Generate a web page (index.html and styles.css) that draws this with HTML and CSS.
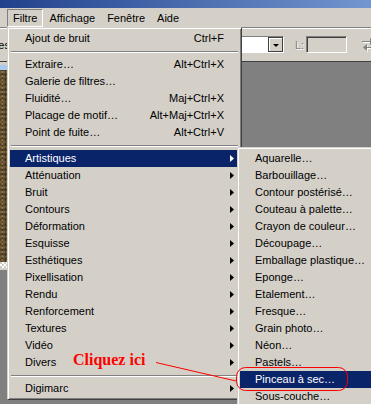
FILE: index.html
```html
<!DOCTYPE html>
<html lang="fr">
<head>
  <meta charset="UTF-8">
  <meta name="viewport" content="width=device-width, initial-scale=1.0">
  <title>Filtre - Artistiques</title>
  <link rel="stylesheet" href="styles.css">
</head>
<body>
  <div class="app">
    <div class="titlebar"></div>

    <nav class="menubar">
      <span class="menubar-item open">Filtre</span>
      <span class="menubar-item">Affichage</span>
      <span class="menubar-item">Fenêtre</span>
      <span class="menubar-item">Aide</span>
    </nav>

    <!-- options bar, mostly hidden behind the menu -->
    <div class="options">
      <div class="opt-label"><span>Styles</span></div>
      <div class="combo"><div class="combo-btn"><i></i></div></div>
      <span class="opt-text">L:</span>
      <div class="field"></div>
      <svg class="swap" width="16" height="16" viewBox="0 0 16 16">
        <g fill="#fff" transform="translate(1 1)">
          <rect x="1" y="4" width="9" height="1"/><polygon points="9,1 13,4.5 9,8"/>
          <rect x="5" y="10" width="9" height="1"/><polygon points="6,7 2,10.5 6,14"/>
        </g>
        <g fill="#808080">
          <rect x="1" y="4" width="9" height="1"/><polygon points="9,1 13,4.5 9,8"/>
          <rect x="5" y="10" width="9" height="1"/><polygon points="6,7 2,10.5 6,14"/>
        </g>
      </svg>
    </div>

    <div class="desk">
      <div class="doc">
        <div class="doc-title"></div>
        <div class="doc-image"></div>
        <div class="doc-checker"></div>
      </div>
    </div>

    <!-- Filtre menu -->
    <div class="menu main-menu">
      <div class="item"><span>Ajout de bruit</span><span class="key">Ctrl+F</span></div>
      <div class="sep"></div>
      <div class="item"><span>Extraire…</span><span class="key">Alt+Ctrl+X</span></div>
      <div class="item"><span>Galerie de filtres…</span></div>
      <div class="item"><span>Fluidité…</span><span class="key">Maj+Ctrl+X</span></div>
      <div class="item"><span>Placage de motif…</span><span class="key">Alt+Maj+Ctrl+X</span></div>
      <div class="item"><span>Point de fuite…</span><span class="key">Alt+Ctrl+V</span></div>
      <div class="sep"></div>
      <div class="item sub hot"><span>Artistiques</span><i class="arrow"></i></div>
      <div class="item sub"><span>Atténuation</span><i class="arrow"></i></div>
      <div class="item sub"><span>Bruit</span><i class="arrow"></i></div>
      <div class="item sub"><span>Contours</span><i class="arrow"></i></div>
      <div class="item sub"><span>Déformation</span><i class="arrow"></i></div>
      <div class="item sub"><span>Esquisse</span><i class="arrow"></i></div>
      <div class="item sub"><span>Esthétiques</span><i class="arrow"></i></div>
      <div class="item sub"><span>Pixellisation</span><i class="arrow"></i></div>
      <div class="item sub"><span>Rendu</span><i class="arrow"></i></div>
      <div class="item sub"><span>Renforcement</span><i class="arrow"></i></div>
      <div class="item sub"><span>Textures</span><i class="arrow"></i></div>
      <div class="item sub"><span>Vidéo</span><i class="arrow"></i></div>
      <div class="item sub"><span>Divers</span><i class="arrow"></i></div>
      <div class="sep"></div>
      <div class="item sub"><span>Digimarc</span><i class="arrow"></i></div>
    </div>

    <!-- Artistiques submenu -->
    <div class="menu sub-menu">
      <div class="item">Aquarelle…</div>
      <div class="item">Barbouillage…</div>
      <div class="item">Contour postérisé…</div>
      <div class="item">Couteau à palette…</div>
      <div class="item">Crayon de couleur…</div>
      <div class="item">Découpage…</div>
      <div class="item">Emballage plastique…</div>
      <div class="item">Eponge…</div>
      <div class="item">Etalement…</div>
      <div class="item">Fresque…</div>
      <div class="item">Grain photo…</div>
      <div class="item">Néon…</div>
      <div class="item">Pastels…</div>
      <div class="item hot">Pinceau à sec…</div>
      <div class="item">Sous-couche…</div>
    </div>

    <!-- annotation -->
    <div class="note">Cliquez ici</div>
    <svg class="marks" width="371" height="404" viewBox="0 0 371 404">
      <line x1="156" y1="362.5" x2="236" y2="381" stroke="#f00" stroke-width="1"/>
      <rect x="236.5" y="367.5" width="111" height="23" rx="9" fill="none" stroke="#f00" stroke-width="1"/>
    </svg>
  </div>
</body>
</html>
```

FILE: styles.css
```css
* { margin: 0; padding: 0; box-sizing: border-box; }
body {
  background: #808080;
  color: #000;
  font-family: "Liberation Sans", Arial, sans-serif;
  font-size: 11px;
}

.app {
  position: relative;
  width: 371px;
  height: 404px;
  overflow: hidden;
  display: flex;
  flex-direction: column;
  background: #808080;
}

.titlebar {
  height: 8px;
  flex-shrink: 0;
  background: linear-gradient(90deg, #22418c, #7296cf);
}

.menubar {
  height: 19px;
  flex-shrink: 0;
  display: flex;
  padding: 1px 0 0 7px;
  background: #d4d0c8;
}
.menubar-item {
  height: 18px;
  line-height: 16px;
  padding: 0 5px;
  border: 1px solid transparent;
  white-space: nowrap;
}
.menubar-item.open { border-color: #808080 #fff #fff #808080; }

/* options bar */
.options {
  height: 35px;
  flex-shrink: 0;
  display: flex;
  align-items: center;
  white-space: nowrap;
  background: #d4d0c8;
  border-top: 1px solid #808080;
  border-bottom: 1px solid #404040;
  box-shadow: inset 0 1px #fff;
}
.opt-label {
  width: 10px;
  flex-shrink: 0;
  display: flex;
  justify-content: flex-end;
  overflow: hidden;
}
.combo {
  width: 120px;
  height: 17px;
  flex-shrink: 0;
  margin-left: 154px;
  display: flex;
  justify-content: flex-end;
  background: #fff;
  border: 1px solid;
  border-color: #808080 #fff #fff #808080;
}
.combo-btn {
  width: 15px;
  height: 15px;
  display: flex;
  align-items: center;
  justify-content: center;
  background: #d4d0c8;
  border: 1px solid #404040;
  box-shadow: inset 1px 1px #fff;
}
.combo-btn i {
  width: 0;
  height: 0;
  border-left: 3px solid transparent;
  border-right: 3px solid transparent;
  border-top: 3px solid #000;
  margin-top: 1px;
}
.opt-text {
  margin-left: 11px;
  color: #808080;
  text-shadow: 1px 1px #fff;
}
.field {
  width: 41px;
  height: 17px;
  flex-shrink: 0;
  margin-left: 2px;
  background: #d4d0c8;
  border: 1px solid;
  border-color: #808080 #fff #fff #808080;
  box-shadow: inset 1px 1px #404040;
}
.swap { flex-shrink: 0; margin-left: 14px; }

/* document window behind the menu */
.desk { flex: 1; background: #808080; }
.doc {
  width: 150px;
  margin-left: -4px;
  padding: 3px 4px 2px;
  background: #d4d0c8;
}
.doc-title { height: 5px; background: #a6caf0; }
.doc-image {
  height: 192px;
  background-color: #6c5836;
  background-image:
    radial-gradient(rgba(160, 135, 85, 0.75) 0.8px, transparent 1.4px),
    radial-gradient(rgba(45, 34, 18, 0.7) 0.8px, transparent 1.4px),
    radial-gradient(rgba(130, 108, 66, 0.6) 1px, transparent 1.6px);
  background-size: 5px 4px, 3px 5px, 7px 6px;
  background-position: 0 0, 1px 2px, 3px 1px;
}
.doc-checker {
  height: 6px;
  background: repeating-conic-gradient(#fff 0 25%, #ccc 0 50%) 0 0 / 4px 4px;
}

/* menus */
.menu {
  position: absolute;
  padding: 2px;
  background: #d4d0c8;
  border: 1px solid;
  border-color: #d4d0c8 #404040 #404040 #d4d0c8;
  box-shadow: inset 1px 1px #fff, inset -1px -1px #808080;
  white-space: nowrap;
}
.main-menu { left: 7px; top: 27px; width: 235px; }
.sub-menu { left: 237px; top: 147px; width: 170px; }

.item {
  display: flex;
  align-items: center;
  height: 17px;
  line-height: 17px;
  padding: 0 15px;
}
.item.sub { padding-right: 5px; }
.item.hot { background: #0a246a; color: #fff; }
.key { margin-left: auto; }
.arrow {
  width: 4px;
  height: 7px;
  margin-left: auto;
  background: currentColor;
  clip-path: polygon(0 0, 100% 50%, 0 100%);
}

.sep { height: 9px; padding: 4px 1px 0; }
.sep::before {
  content: "";
  display: block;
  border-top: 1px solid #808080;
  border-bottom: 1px solid #fff;
}

/* annotation */
.note {
  position: absolute;
  left: 73px;
  top: 351px;
  color: #f00;
  font-family: "Liberation Serif", "Times New Roman", serif;
  font-weight: bold;
  font-size: 16px;
  line-height: 17px;
}
.marks {
  position: absolute;
  left: 0;
  top: 0;
  pointer-events: none;
}
```
